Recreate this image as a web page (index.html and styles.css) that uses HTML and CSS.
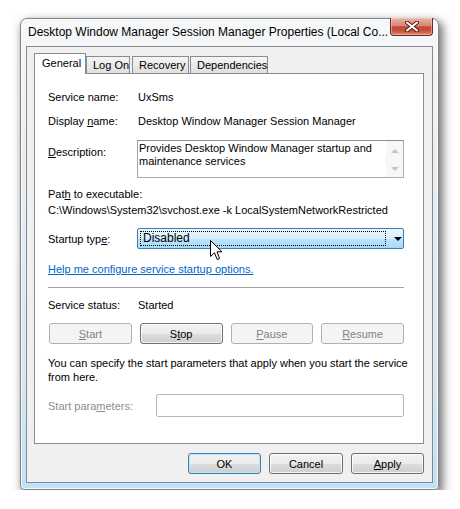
FILE: index.html
```html
<!DOCTYPE html>
<html lang="en">
<head>
    <meta charset="UTF-8">
    <title>Service Properties</title>
    <link rel="stylesheet" href="styles.css">
</head>
<body>
    <div class="window">
        <div class="titlebar">
            <span class="title">Desktop Window Manager Session Manager Properties (Local Co...</span>
            <div class="close-btn">
                <svg width="16" height="11" viewBox="0 0 16 11">
                    <path d="M3 1.5 L13 9.5 M13 1.5 L3 9.5" stroke="#5b1d15" stroke-width="4" stroke-linecap="round"/>
                    <path d="M3 1.5 L13 9.5 M13 1.5 L3 9.5" stroke="#ffffff" stroke-width="2" stroke-linecap="round"/>
                </svg>
            </div>
        </div>

        <div class="client">
            <div class="tabs">
                <div class="tab active">General</div>
                <div class="tab tab-logon">Log On</div>
                <div class="tab tab-recovery">Recovery</div>
                <div class="tab tab-deps">Dependencies</div>
            </div>

            <div class="pane">
                <div class="row row-first">
                    <span class="label">Service name:</span>
                    <span class="value">UxSms</span>
                </div>
                <div class="row row-display">
                    <span class="label">Display <u>n</u>ame:</span>
                    <span class="value">Desktop Window Manager Session Manager</span>
                </div>
                <div class="row row-desc">
                    <span class="label label-desc"><u>D</u>escription:</span>
                    <div class="desc-box">
                        <div class="desc-text">Provides Desktop Window Manager startup and maintenance services</div>
                        <div class="scrollbar">
                            <span class="arrow-up"></span>
                            <span class="arrow-down"></span>
                        </div>
                    </div>
                </div>
                <div class="path-label">Pat<u>h</u> to executable:</div>
                <div class="path-value">C:\Windows\System32\svchost.exe -k LocalSystemNetworkRestricted</div>
                <div class="row row-startup">
                    <span class="label">Startup typ<u>e</u>:</span>
                    <div class="combo">
                        <span class="combo-focus">Disabled</span>
                        <span class="combo-arrow"></span>
                    </div>
                </div>
                <div class="link-row"><a class="link" href="#">Help me configure service startup options.</a></div>
                <div class="separator"></div>
                <div class="row row-status">
                    <span class="label">Service status:</span>
                    <span class="value">Started</span>
                </div>
                <div class="control-buttons">
                    <button class="btn disabled"><u>S</u>tart</button>
                    <button class="btn">S<u>t</u>op</button>
                    <button class="btn disabled"><u>P</u>ause</button>
                    <button class="btn disabled"><u>R</u>esume</button>
                </div>
                <p class="hint">You can specify the start parameters that apply when you start the service from here.</p>
                <div class="row row-params">
                    <span class="label label-params">Start para<u>m</u>eters:</span>
                    <div class="params-input"></div>
                </div>
            </div>

            <div class="dialog-buttons">
                <button class="btn default">OK</button>
                <button class="btn btn-cancel">Cancel</button>
                <button class="btn"><u>A</u>pply</button>
            </div>
        </div>
    </div>

    <!-- mouse pointer over the combo box -->
    <svg class="cursor" width="13" height="21" viewBox="0 0 13 21">
        <path d="M0.5 0.5 L0.5 16.5 L4.5 12.8 L7.2 19.5 L9.6 18.5 L7 11.8 L12 11.8 Z" fill="#ffffff" stroke="#000000" stroke-width="1" stroke-linejoin="miter"/>
    </svg>
</body>
</html>
```

FILE: styles.css
```css
/* Page */
body {
    margin: 0;
    background: #ffffff;
    font-family: "Liberation Sans", Arial, sans-serif;
    font-size: 11px;
    color: #000;
}

/* Window frame */
.window {
    box-sizing: border-box;
    width: 419px;
    height: 472px;
    margin: 18px 0 0 20px;
    padding: 0 5px 6px 5px;
    border: 1px solid #7d8287;
    border-radius: 7px 7px 4px 4px;
    background: linear-gradient(to bottom, #f6f7f8 0%, #e9edf0 35%, #d8e7f1 75%, #bfe2f6 100%);
    box-shadow: 3px 4px 10px 1px rgba(0, 0, 0, 0.55), inset 0 0 0 1px rgba(255, 255, 255, 0.8);
}

.titlebar {
    display: flex;
    justify-content: space-between;
    align-items: flex-start;
    height: 27px;
}

.title {
    padding: 6px 0 0 2px;
    font-size: 12px;
    line-height: 15px;
    white-space: nowrap;
}

.close-btn {
    box-sizing: border-box;
    width: 43px;
    height: 18px;
    margin: -1px 0 0 0;
    display: flex;
    align-items: center;
    justify-content: center;
    border: 1px solid #6e2a22;
    border-top: none;
    border-radius: 0 0 4px 4px;
    background: linear-gradient(to bottom, #e9b1a6 0%, #d88776 45%, #c24a36 52%, #c6503c 75%, #dc8c6c 100%);
    box-shadow: inset 0 0 0 1px rgba(255, 220, 210, 0.45);
}

/* Client area */
.client {
    box-sizing: border-box;
    height: 437px;
    padding: 6px 8px 0 7px;
    border: 1px solid #858a90;
    background: #f0f0f0;
}

/* Tabs */
.tabs {
    display: flex;
    align-items: flex-end;
    height: 20px;
}

.tab {
    box-sizing: border-box;
    height: 17px;
    line-height: 16px;
    padding-left: 6px;
    white-space: nowrap;
    border: 1px solid #898c95;
    border-bottom: none;
    background: linear-gradient(to bottom, #f5f5f5 0%, #ebebeb 50%, #dedede 100%);
}

.tab.active {
    position: relative;
    z-index: 1;
    width: 52px;
    height: 21px;
    margin-bottom: -1px;
    line-height: 18px;
    padding-left: 7px;
    background: #ffffff;
}

.tab-logon {
    width: 44px;
    padding-left: 6px;
}

.tab-recovery {
    width: 57px;
    margin-left: 2px;
    padding-left: 6px;
}

.tab-deps {
    width: 78px;
    margin-left: 1px;
    padding-left: 6px;
}

/* Tab page */
.pane {
    box-sizing: border-box;
    height: 371px;
    padding: 0 19px 0 13px;
    border: 1px solid #898c95;
    background: #ffffff;
    overflow: hidden;
}

.row {
    display: flex;
    align-items: center;
}

.label {
    flex: none;
    width: 89px;
    line-height: 14px;
}

.value {
    padding-left: 1px;
    line-height: 14px;
    white-space: nowrap;
}

.row-first { margin-top: 16px; }
.row-display { margin-top: 10px; }

.row-desc {
    margin-top: 12px;
    align-items: flex-start;
}

.label-desc { padding-top: 5px; }

.desc-box {
    box-sizing: border-box;
    display: flex;
    width: 267px;
    height: 38px;
    border: 1px solid #abadb3;
    border-top-color: #8e8f8f;
    border-left-color: #a5a6a8;
    background: #ffffff;
}

.desc-text {
    flex: 1;
    padding: 1px 0 0 1px;
    line-height: 13px;
}

.scrollbar {
    width: 17px;
    display: flex;
    flex-direction: column;
    justify-content: space-between;
    align-items: center;
    padding: 8px 0 6px 0;
    background: #f7f7f7;
}

.arrow-up,
.arrow-down {
    width: 0;
    height: 0;
    border-left: 4px solid transparent;
    border-right: 4px solid transparent;
}

.arrow-up { border-bottom: 4px solid #c4c4c4; }
.arrow-down { border-top: 4px solid #c4c4c4; }

.path-label {
    margin-top: 9px;
    line-height: 14px;
}

.path-value {
    margin-top: 2px;
    line-height: 14px;
    white-space: nowrap;
}

/* Startup combo */
.row-startup { margin-top: 11px; }

.combo {
    box-sizing: border-box;
    display: flex;
    align-items: center;
    width: 268px;
    height: 21px;
    padding: 0 0 0 2px;
    border: 1px solid #3c7fb1;
    border-radius: 2px;
    background: linear-gradient(to bottom, #eaf6fd 0%, #d9f0fc 50%, #bee6fd 51%, #a7d9f5 100%);
}

.combo-focus {
    box-sizing: border-box;
    width: 246px;
    height: 15px;
    line-height: 13px;
    padding-left: 2px;
    font-size: 12px;
    border: 1px dotted #000;
}

.combo-arrow {
    margin-left: 8px;
    width: 0;
    height: 0;
    border-left: 4px solid transparent;
    border-right: 4px solid transparent;
    border-top: 4px solid #000;
}

.link-row {
    margin-top: 13px;
    line-height: 14px;
}

.link {
    color: #0066cc;
    text-decoration: underline;
}

.separator {
    margin-top: 11px;
    height: 1px;
    background: #a0a0a0;
}

.row-status { margin-top: 10px; }

/* Service control buttons */
.control-buttons {
    display: grid;
    grid-template-columns: repeat(4, 1fr);
    gap: 8px;
    margin-top: 11px;
    padding-left: 1px;
}

.btn {
    box-sizing: border-box;
    height: 21px;
    padding: 0;
    border: 1px solid #707070;
    border-radius: 3px;
    font-family: inherit;
    font-size: 11px;
    color: #000;
    background: linear-gradient(to bottom, #f2f2f2 0%, #ebebeb 50%, #dddddd 51%, #cfcfcf 100%);
    box-shadow: inset 0 0 0 1px rgba(255, 255, 255, 0.75);
}

.btn.disabled {
    border-color: #adb2b5;
    background: #f4f4f4;
    color: #838383;
    box-shadow: none;
}

.btn.default {
    border-color: #3c7fb1;
    box-shadow: inset 0 0 0 1px #bfe7fb;
}

.hint {
    margin: 12px -12px 0 0;
    line-height: 14px;
}

.row-params { margin-top: 10px; }

.label-params {
    width: 108px;
    color: #8d8d8d;
}

.params-input {
    box-sizing: border-box;
    flex: 1;
    height: 23px;
    border: 1px solid #b8b8b8;
    border-radius: 2px;
    background: #ffffff;
}

/* OK / Cancel / Apply */
.dialog-buttons {
    display: flex;
    justify-content: flex-end;
    gap: 8px;
    margin-top: 9px;
}

.dialog-buttons .btn { width: 73px; }
.dialog-buttons .btn-cancel { width: 74px; }

.cursor {
    position: absolute;
    left: 210px;
    top: 240px;
}
```
